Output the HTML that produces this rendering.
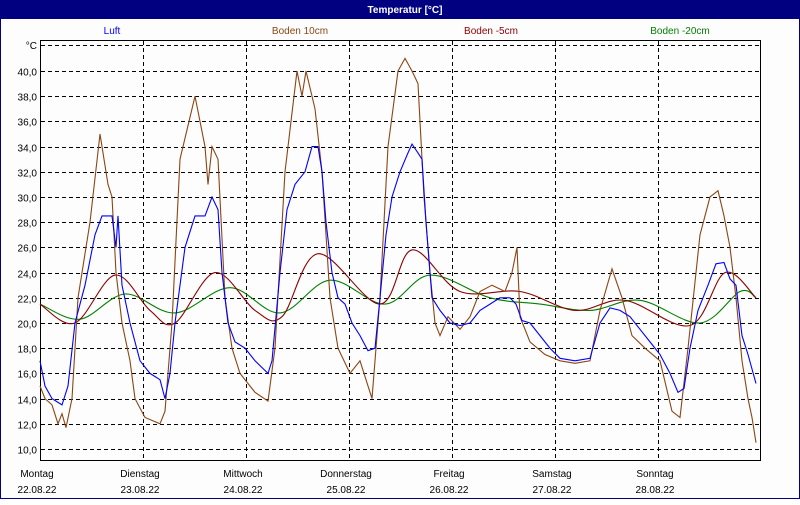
<!DOCTYPE html>
<html><head><meta charset="utf-8"><style>
body{margin:0;width:800px;height:500px;overflow:hidden;background:#fff;font-family:"Liberation Sans",sans-serif}
</style></head><body>
<svg id="s" width="800" height="500" xmlns="http://www.w3.org/2000/svg" font-family="Liberation Sans, sans-serif" font-size="10">
<rect x="0" y="0" width="800" height="500" fill="#fdfdfd"/>
<rect x="0.5" y="0.5" width="799" height="498" fill="none" stroke="#000080"/>
<rect x="0" y="0" width="800" height="19" fill="#000080"/>
<text x="405" y="13" fill="#fff" font-weight="bold" font-size="10" text-anchor="middle">Temperatur [°C]</text>
<text x="112" y="34" fill="#0000ff" text-anchor="middle">Luft</text>
<text x="300" y="34" fill="#8b4513" text-anchor="middle">Boden 10cm</text>
<text x="491" y="34" fill="#8b0000" text-anchor="middle">Boden -5cm</text>
<text x="680" y="34" fill="#008000" text-anchor="middle">Boden -20cm</text>
<g id="grid" stroke="#000" stroke-dasharray="4,3" stroke-width="1"></g>
<g id="lab" fill="#000" font-size="10"></g>
<path d="M40.5 40 V460.5 H760.5 V40 M40 40.5 H761" fill="none" stroke="#000"/>
<g id="curves" fill="none" stroke-width="1.1"></g>
</svg>
<script>
const ns="http://www.w3.org/2000/svg";
const Y=t=>71+(40-t)*12.6;
const g=document.getElementById('grid'),lab=document.getElementById('lab'),cv=document.getElementById('curves');
function el(p,n,a,txt){const e=document.createElementNS(ns,n);for(const k in a)e.setAttribute(k,a[k]);if(txt)e.textContent=txt;p.appendChild(e);return e;}
el(g,'line',{x1:41,x2:760,y1:45.5,y2:45.5});
el(lab,'text',{x:37,y:49,'text-anchor':'end'},'°C');
for(let t=10;t<=40;t+=2){const y=Math.round(Y(t))+0.5;el(g,'line',{x1:41,x2:760,y1:y,y2:y});
el(lab,'text',{x:37,y:y+4,'text-anchor':'end'},t.toFixed(1).replace('.',','));}
const days=[["Montag","22.08.22"],["Dienstag","23.08.22"],["Mittwoch","24.08.22"],["Donnerstag","25.08.22"],["Freitag","26.08.22"],["Samstag","27.08.22"],["Sonntag","28.08.22"]];
days.forEach((d,i)=>{const x=40+i*103;if(i>0)el(g,'line',{x1:x+0.5,x2:x+0.5,y1:41,y2:460});
el(lab,'text',{x:x-3,y:477,'text-anchor':'middle'},d[0]);el(lab,'text',{x:x-3,y:493,'text-anchor':'middle'},d[1]);});
function line(pts,c){el(cv,'polyline',{points:pts.map(p=>p[0]+','+Y(p[1]).toFixed(1)).join(' '),stroke:c});}
function smooth(pts,c){const P=pts.map(p=>[p[0],Y(p[1])]);let d='M'+P[0][0]+' '+P[0][1].toFixed(1);
for(let i=0;i<P.length-1;i++){const p0=P[Math.max(0,i-1)],p1=P[i],p2=P[i+1],p3=P[Math.min(P.length-1,i+2)];
const c1=[p1[0]+(p2[0]-p0[0])/6,p1[1]+(p2[1]-p0[1])/6],c2=[p2[0]-(p3[0]-p1[0])/6,p2[1]-(p3[1]-p1[1])/6];
d+=` C${c1[0].toFixed(1)} ${c1[1].toFixed(1)} ${c2[0].toFixed(1)} ${c2[1].toFixed(1)} ${p2[0]} ${p2[1].toFixed(1)}`;}
el(cv,'path',{d:d,stroke:c});}
smooth([[40,21.5],[80,20.3],[125,22.3],[175,20.8],[230,22.8],[280,20.8],[330,23.4],[385,21.5],[430,23.8],[490,22],[540,21.5],[590,21],[640,21.8],[700,20],[740,22.5],[756,22]],'#008000');
smooth([[40,21.5],[75,20],[115,23.8],[150,21],[175,20],[215,24],[255,21],[282,20.5],[318,25.5],[380,21.5],[412,25.8],[460,22.5],[520,22.5],[575,21],[625,21.8],[690,19.8],[725,24],[756,22]],'#8b0000');
line([[40,15],[45,14],[52,13.5],[58,12],[62,12.8],[66,11.7],[72,14],[78,22],[90,28],[100,35],[108,31],[112,30],[116,24],[122,20],[130,17],[135,14],[145,12.5],[160,12],[165,13],[172,20],[180,33],[195,38],[205,34],[208,31],[212,34],[218,33],[225,22],[232,18],[240,16],[255,14.5],[268,13.8],[275,18],[285,32],[297,40],[302,38],[306,40],[315,37],[322,32],[330,22],[338,18],[350,16],[360,17],[372,14],[380,22],[388,34],[398,40],[405,41],[412,40],[418,39],[424,30],[430,24],[435,20],[440,19],[448,20.5],[460,19.5],[470,20.5],[480,22.5],[492,23],[505,22.5],[512,24],[517,26],[520,20.5],[530,18.5],[545,17.5],[560,17],[575,16.8],[590,17],[600,21],[612,24.3],[622,22],[632,19],[645,18],[660,17],[672,13],[680,12.5],[688,18],[700,27],[710,30],[718,30.5],[724,28.5],[730,26],[736,22],[742,17],[748,14],[752,12.5],[756,10.5]],'#8b4513');
line([[40,17],[45,15],[52,14],[62,13.5],[68,15],[75,20],[85,23],[95,27],[102,28.5],[112,28.5],[116,26],[118,28.5],[122,23],[130,20],[140,17],[150,16],[160,15.5],[165,14],[170,16],[175,20],[185,26],[195,28.5],[205,28.5],[212,30],[218,29],[222,24],[228,20],[235,18.5],[245,18],[255,17],[268,16],[272,17],[280,24],[287,29],[295,31],[305,32],[312,34],[318,34],[322,32],[326,28],[332,24],[338,22],[345,21.5],[352,20],[360,19],[368,17.8],[375,18],[380,22],[386,27],[392,30],[400,32],[408,33.5],[412,34.2],[418,33.5],[422,33],[426,28],[432,22],[440,21],[450,20],[460,19.8],[470,20],[480,21],[490,21.5],[500,22],[510,22],[516,21.5],[522,20.2],[530,20],[540,19],[550,18],[560,17.2],[575,17],[590,17.2],[600,20],[610,21.2],[620,21],[630,20.5],[640,19.5],[650,18.5],[660,17.5],[670,16],[678,14.5],[684,14.8],[690,18],[698,21],[708,23],[716,24.7],[724,24.8],[730,23.5],[736,23],[742,19],[748,17.5],[756,15.2]],'#0000ff');
</script>
</body></html>
